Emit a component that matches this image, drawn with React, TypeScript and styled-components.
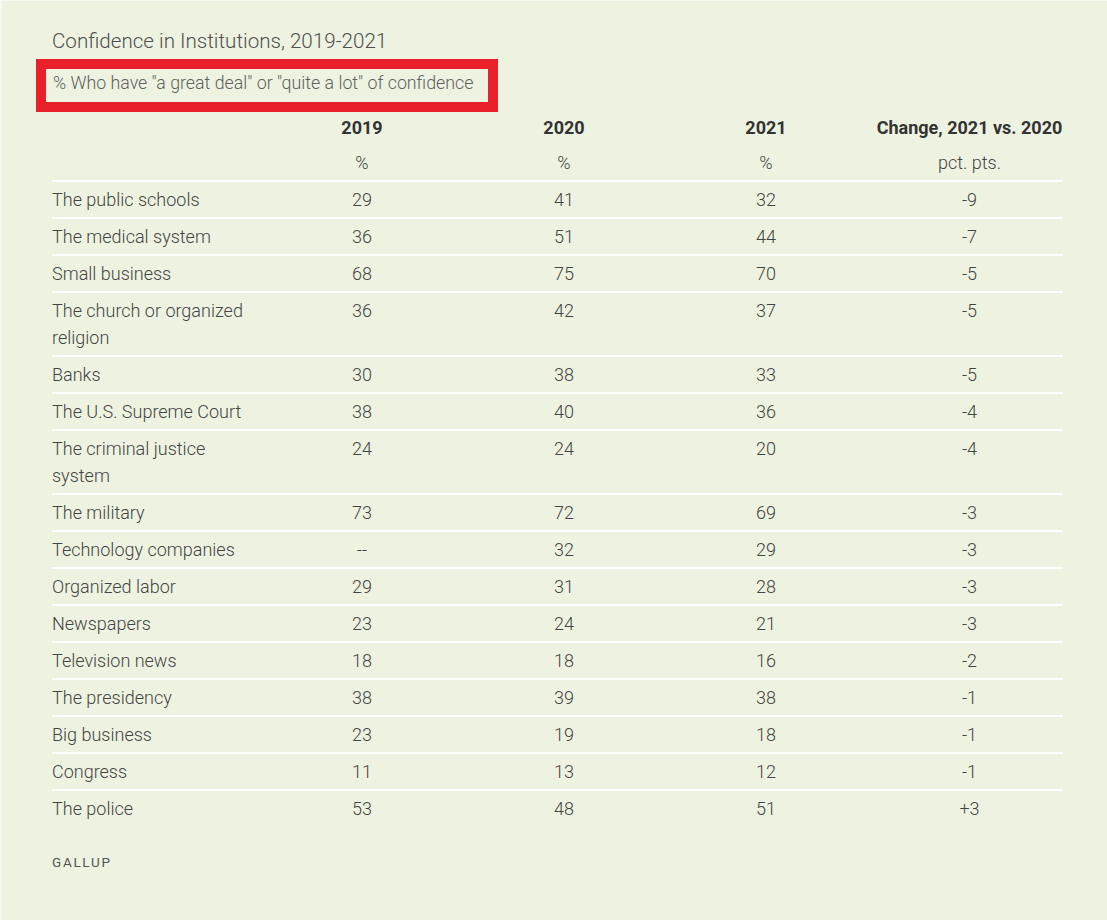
import React from "react";
import styled, { createGlobalStyle } from "styled-components";

const Global = createGlobalStyle`
  html, body { margin: 0; padding: 0; background: #edf3e0; }
  body { font-family: Roboto, "Liberation Sans", Arial, sans-serif; }
`;

const Page = styled.div`
  box-sizing: border-box;
  min-height: 920px;
  width: 1107px;
  background: #edf3e0;
  border-left: 2px solid #f6f9f0;
  border-top: 1px solid #f6f9f0;
  padding: 26px 44px 0 50px;
`;

const Title = styled.h1`
  margin: 0;
  font-size: 20.6px;
  line-height: 28px;
  font-weight: 300;
  color: #4f4f4f;
`;

const Subtitle = styled.div`
  box-sizing: border-box;
  width: 462px;
  height: 53px;
  margin: 4px 0 -2px -16px;
  border: 10px solid #e8202a;
  padding: 0 0 0 7px;
  font-size: 17.8px;
  line-height: 28px;
  font-weight: 300;
  color: #606060;
  white-space: nowrap;
`;

const Table = styled.div`
  width: 1011px;
`;

const Row = styled.div<{ $line?: boolean }>`
  display: grid;
  grid-template-columns: 209px 202px 202px 202px 196px;
  border-bottom: ${(p) => (p.$line ? "2px solid #ffffff" : "none")};
`;

const Cell = styled.div<{ $head?: boolean; $label?: boolean }>`
  padding: 4px ${(p) => (p.$label ? "15px" : "0")} 4px 0;
  font-size: 18px;
  line-height: 27px;
  font-weight: ${(p) => (p.$head ? 700 : 300)};
  color: ${(p) => (p.$head ? "#333333" : "#444444")};
  text-align: ${(p) => (p.$label ? "left" : "center")};
  white-space: ${(p) => (p.$head ? "nowrap" : "normal")};
  &:last-child {
    padding-left: 9px;
  }
`;

const Source = styled.div`
  margin-top: 26px;
  font-size: 13.5px;
  line-height: 20px;
  letter-spacing: 1.7px;
  color: #555;
  font-weight: 400;
`;

const data: [string, string, string, string, string][] = [
  ["The public schools", "29", "41", "32", "-9"],
  ["The medical system", "36", "51", "44", "-7"],
  ["Small business", "68", "75", "70", "-5"],
  ["The church or organized religion", "36", "42", "37", "-5"],
  ["Banks", "30", "38", "33", "-5"],
  ["The U.S. Supreme Court", "38", "40", "36", "-4"],
  ["The criminal justice system", "24", "24", "20", "-4"],
  ["The military", "73", "72", "69", "-3"],
  ["Technology companies", "--", "32", "29", "-3"],
  ["Organized labor", "29", "31", "28", "-3"],
  ["Newspapers", "23", "24", "21", "-3"],
  ["Television news", "18", "18", "16", "-2"],
  ["The presidency", "38", "39", "38", "-1"],
  ["Big business", "23", "19", "18", "-1"],
  ["Congress", "11", "13", "12", "-1"],
  ["The police", "53", "48", "51", "+3"],
];

export default function App() {
  return (
    <Page>
      <Global />
      <Title>Confidence in Institutions, 2019-2021</Title>
      <Subtitle>% Who have "a great deal" or "quite a lot" of confidence</Subtitle>
      <Table>
        <Row>
          <Cell $label />
          <Cell $head>2019</Cell>
          <Cell $head>2020</Cell>
          <Cell $head>2021</Cell>
          <Cell $head>Change, 2021 vs. 2020</Cell>
        </Row>
        <Row $line>
          <Cell $label />
          <Cell>%</Cell>
          <Cell>%</Cell>
          <Cell>%</Cell>
          <Cell>pct. pts.</Cell>
        </Row>
        {data.map((r, i) => (
          <Row key={r[0]} $line={i < data.length - 1}>
            <Cell $label>{r[0]}</Cell>
            <Cell>{r[1]}</Cell>
            <Cell>{r[2]}</Cell>
            <Cell>{r[3]}</Cell>
            <Cell>{r[4]}</Cell>
          </Row>
        ))}
      </Table>
      <Source>GALLUP</Source>
    </Page>
  );
}
